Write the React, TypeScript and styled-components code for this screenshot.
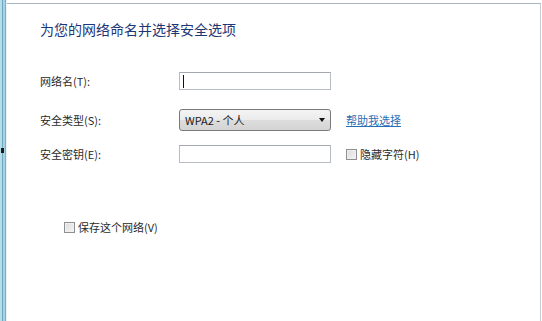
import React from 'react'
import styled, { createGlobalStyle } from 'styled-components'

const GlobalStyle = createGlobalStyle`
  html, body {
    margin: 0;
    padding: 0;
    background: #ffffff;
  }
  body {
    font-family: "Noto Sans CJK SC", "Liberation Sans", sans-serif;
    font-size: 11px;
    color: #2a2a2a;
  }
`

const Window = styled.div`
  position: relative;
  display: flex;
  width: 542px;
  height: 321px;
  box-sizing: border-box;
  background: #ffffff;
`

const Frame = styled.div`
  width: 7px;
  flex-shrink: 0;
  background: linear-gradient(90deg, #b9dcea 0, #b9dcea 2px, #6fa9c0 2px, #6fa9c0 3px, #a6d2e4 3px, #a6d2e4 5px, #7fb0c4 5px, #7fb0c4 6px, #e8f2f6 6px);
`

const ResizeMark = styled.span`
  position: absolute;
  left: 1px;
  top: 148px;
  width: 3px;
  height: 5px;
  background: #1a1a1a;
`

const Panel = styled.div`
  flex: 1;
  margin-top: 3px;
  border-top: 1px solid #a9b6c4;
  border-right: 1px solid #c4ccd4;
  margin-right: 1px;
  padding: 15px 0 0 33px;
  display: flex;
  flex-direction: column;
`

const Title = styled.h1`
  margin: 0;
  font-size: 14px;
  line-height: 20px;
  font-weight: normal;
  color: #1d3676;
`

const Form = styled.div`
  display: flex;
  flex-direction: column;
  margin-top: 33px;
`

const Row = styled.div<{ $top?: number; $height: number }>`
  display: grid;
  grid-template-columns: 139px 152px auto;
  align-items: center;
  height: ${({ $height }) => $height}px;
  margin-top: ${({ $top }) => $top ?? 0}px;
`

const Label = styled.span`
  font-size: 11px;
  line-height: 16px;
  color: #2a2a2a;
`

const TextBox = styled.div`
  height: 18px;
  box-sizing: border-box;
  border: 1px solid #b8bcc4;
  border-top-color: #a4a8b0;
  background: #ffffff;
  display: flex;
  align-items: center;
  padding-left: 3px;
`

const Caret = styled.span`
  width: 1px;
  height: 13px;
  background: #111;
`

const Select = styled.div`
  height: 22px;
  box-sizing: border-box;
  border: 1px solid #7a7a7a;
  border-radius: 3px;
  background: linear-gradient(#f4f4f4 0%, #ebebeb 48%, #dddddd 52%, #d4d4d4 100%);
  display: flex;
  align-items: center;
  justify-content: space-between;
  padding: 0 5px 0 5px;
  font-size: 11px;
  color: #1a1a1a;
`

const Arrow = styled.span`
  width: 0;
  height: 0;
  border-left: 3.5px solid transparent;
  border-right: 3.5px solid transparent;
  border-top: 4px solid #111;
`

const Side = styled.div`
  padding-left: 15px;
  display: flex;
  align-items: center;
`

const HelpLink = styled.a`
  font-size: 11px;
  color: #2a6fb5;
  text-decoration: underline;
`

const CheckLabel = styled.label`
  display: flex;
  align-items: center;
  gap: 3px;
  font-size: 11px;
  color: #2a2a2a;
`

const Box = styled.span`
  width: 11px;
  height: 11px;
  box-sizing: border-box;
  border: 1px solid #8e8f8f;
  background: linear-gradient(135deg, #dcdcdc, #f4f4f4);
  box-shadow: inset 0 0 0 1px #f0f0f0;
`

const SaveRow = styled.div`
  margin-top: 56px;
  padding-left: 24px;
`

export default function App() {
  return (
    <>
      <GlobalStyle />
      <Window>
        <Frame />
        <ResizeMark />
        <Panel>
          <Title>为您的网络命名并选择安全选项</Title>
          <Form>
            <Row $height={18}>
              <Label>网络名(T):</Label>
              <TextBox>
                <Caret />
              </TextBox>
            </Row>
            <Row $height={22} $top={19}>
              <Label>安全类型(S):</Label>
              <Select>
                <span>WPA2 - 个人</span>
                <Arrow />
              </Select>
              <Side>
                <HelpLink href="#">帮助我选择</HelpLink>
              </Side>
            </Row>
            <Row $height={18} $top={14}>
              <Label>安全密钥(E):</Label>
              <TextBox />
              <Side>
                <CheckLabel>
                  <Box />
                  隐藏字符(H)
                </CheckLabel>
              </Side>
            </Row>
          </Form>
          <SaveRow>
            <CheckLabel>
              <Box />
              保存这个网络(V)
            </CheckLabel>
          </SaveRow>
        </Panel>
      </Window>
    </>
  )
}
